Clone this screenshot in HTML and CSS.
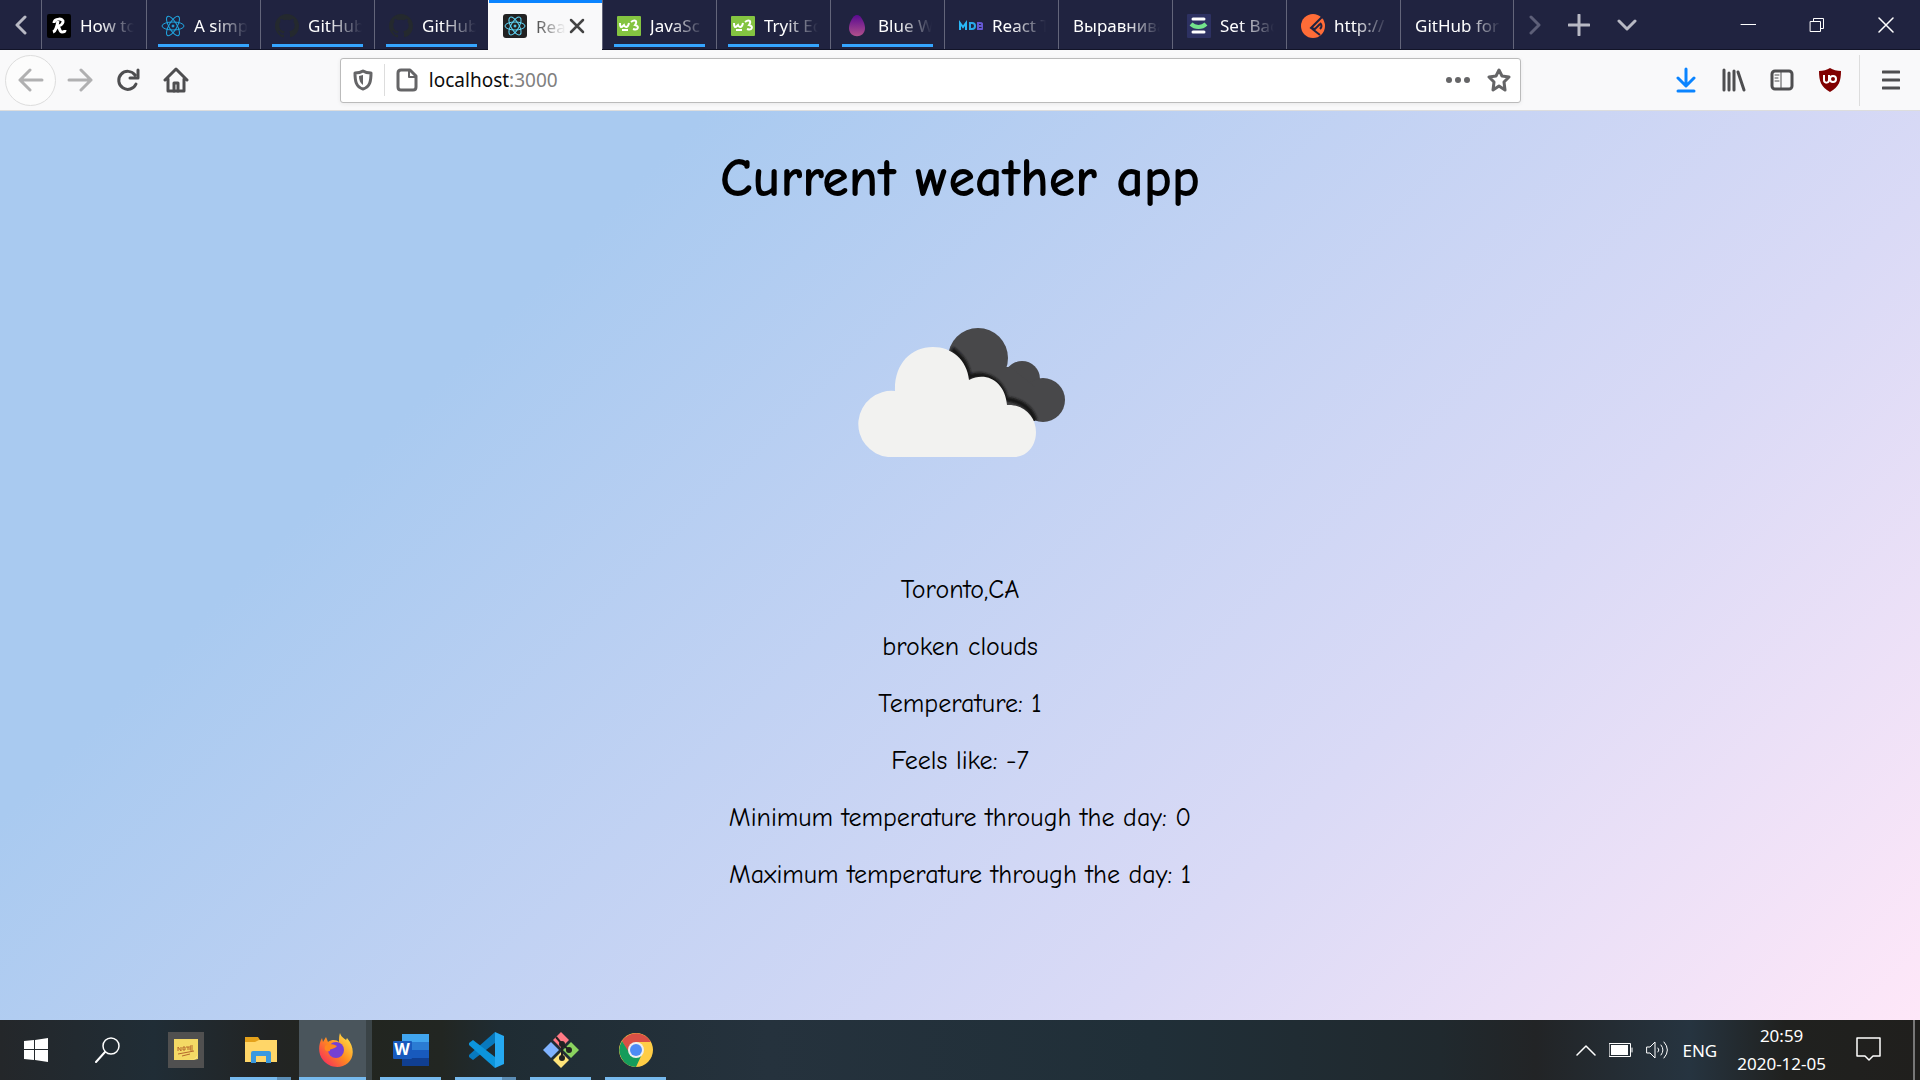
FILE: index.html
```html
<!DOCTYPE html>
<html lang="en">
<head>
<meta charset="utf-8">
<title>React App</title>
<link rel="stylesheet" href="styles.css">
</head>
<body>
<header>
  <nav class="tabbar" aria-label="Tabs">
    <button class="scroll" aria-label="Scroll left"><svg width="12" height="20" viewBox="0 0 12 20" class="line"><path d="M10 2 2 10l8 8" stroke-width="3"/></svg></button>
    <a href="#" class="tab first"><svg width="24" height="24" viewBox="0 0 24 24"><rect width="24" height="24" rx="2"/><path d="M6 18c3-1 4-6 5-11M7 9c0-5 10-5 9-1-1 4-5 4-6 4 3 0 2 6 5 6 2 0 3-1 3-2" fill="none" stroke="#fff" stroke-width="3"/></svg><span>How to</span></a>
    <a href="#" class="tab unread"><svg width="24" height="24" viewBox="0 0 24 24" class="atom"><ellipse cx="12" cy="12" rx="11" ry="4"/><ellipse cx="12" cy="12" rx="11" ry="4" transform="rotate(60 12 12)"/><ellipse cx="12" cy="12" rx="11" ry="4" transform="rotate(120 12 12)"/><circle cx="12" cy="12" r="1"/></svg><span>A simp</span></a>
    <a href="#" class="tab unread"><svg width="24" height="24" viewBox="0 0 16 16"><path class="octo" d="M8 0C3.6 0 0 3.6 0 8c0 3.500 2.300 6.500 5.500 7.600.4.100.5-.2.500-.4v-1.400c-2.200.5-2.700-1-2.700-1-.4-.9-.9-1.200-.9-1.200-.7-.5.1-.5.100-.5.800.1 1.200.8 1.200.8.700 1.200 1.900.9 2.300.7.100-.5.300-.9.500-1.100-1.800-.2-3.600-.9-3.600-4 0-.9.300-1.600.8-2.100-.1-.2-.4-1 .1-2.100 0 0 .7-.2 2.200.8a7.500 7.500 0 0 1 4 0c1.500-1 2.200-.8 2.200-.8.400 1.100.2 1.900.1 2.100.5.600.8 1.300.8 2.100 0 3.100-1.900 3.700-3.700 3.900.3.300.6.800.6 1.500v2.200c0 .2.100.5.600.4A8 8 0 0 0 16 8c0-4.400-3.600-8-8-8z"/></svg><span>GitHub</span></a>
    <a href="#" class="tab unread"><svg width="24" height="24" viewBox="0 0 16 16"><path class="octo" d="M8 0C3.6 0 0 3.6 0 8c0 3.500 2.300 6.500 5.500 7.600.4.100.5-.2.500-.4v-1.400c-2.200.5-2.700-1-2.700-1-.4-.9-.9-1.200-.9-1.200-.7-.5.1-.5.100-.5.800.1 1.200.8 1.200.8.700 1.200 1.900.9 2.300.7.100-.5.300-.9.500-1.100-1.800-.2-3.600-.9-3.600-4 0-.9.300-1.600.8-2.100-.1-.2-.4-1 .1-2.100 0 0 .7-.2 2.200.8a7.500 7.500 0 0 1 4 0c1.500-1 2.200-.8 2.200-.8.400 1.100.2 1.900.1 2.100.5.600.8 1.300.8 2.100 0 3.100-1.900 3.700-3.700 3.900.3.300.6.800.6 1.500v2.200c0 .2.100.5.600.4A8 8 0 0 0 16 8c0-4.400-3.600-8-8-8z"/></svg><span>GitHub</span></a>
    <div class="tab active"><svg width="24" height="24" viewBox="0 0 24 24" class="atom pale"><rect width="24" height="24" rx="3"/><ellipse cx="12" cy="12" rx="10" ry="4"/><ellipse cx="12" cy="12" rx="10" ry="4" transform="rotate(60 12 12)"/><ellipse cx="12" cy="12" rx="10" ry="4" transform="rotate(120 12 12)"/><circle cx="12" cy="12" r="1"/></svg><span>Rea</span><button class="close" aria-label="Close tab"><svg width="16" height="16" viewBox="0 0 16 16" class="line"><path d="m2 2 12 12M14 2 2 14" stroke-width="2.500"/></svg></button></div>
    <a href="#" class="tab unread"><svg width="24" height="24" viewBox="0 0 24 24"><rect y="2" width="24" height="20" rx="1" fill="#84c441"/><path d="M3 9c0 4 1 5 3 3l1-1c1 3 4 3 5-2M14 8c4-3 7-1 4 3 5 1 3 6-2 4M5 16h6" fill="none" stroke="#fff" stroke-width="2"/></svg><span>JavaSc</span></a>
    <a href="#" class="tab unread"><svg width="24" height="24" viewBox="0 0 24 24"><rect y="2" width="24" height="20" rx="1" fill="#84c441"/><path d="M3 9c0 4 1 5 3 3l1-1c1 3 4 3 5-2M14 8c4-3 7-1 4 3 5 1 3 6-2 4M5 16h6" fill="none" stroke="#fff" stroke-width="2"/></svg><span>Tryit Ed</span></a>
    <a href="#" class="tab unread"><svg width="24" height="24" viewBox="0 0 24 24"><defs><linearGradient id="egg" x2="0" y2="1"><stop stop-color="#5a0a91"/><stop offset="1" stop-color="#b0508c"/></linearGradient></defs><path d="M12 1c4 0 8 8 8 13 0 11-16 11-16 0C4 9 8 1 12 1" fill="url(#egg)"/></svg><span>Blue W</span></a>
    <a href="#" class="tab"><svg width="24" height="24" viewBox="0 0 24 24" fill="none" stroke-width="2"><path d="M1 16V9l3 4 3-4v7" stroke="#29b6f6"/><path d="M11 9h2c4 0 4 6 0 6h-2z" stroke="#29a8e8"/><path d="M19 9h2c3 0 3 3 0 3h-2 3c3 0 2 3 0 3h-3z" stroke="#6558d4"/></svg><span>React T</span></a>
    <a href="#" class="tab"><span>Выравнива</span></a>
    <a href="#" class="tab"><svg width="24" height="24" viewBox="0 0 24 24"><rect width="24" height="24" rx="1" fill="#2d3162"/><path d="M6 5h11M6 18h11" stroke="#fff" stroke-width="3" stroke-linecap="round"/><path d="M4 10c4 4 11 4 15 0" fill="none" stroke="#73e38c" stroke-width="4"/></svg><span>Set Bac</span></a>
    <a href="#" class="tab"><svg width="24" height="24" viewBox="0 0 24 24"><circle cx="12" cy="12" r="12" fill="#ff6c37"/><path d="m21 3-11 11 9 7M10 14l4 1 5-5M19 9c2 2 2 4 0 6" fill="none" stroke="#202340" stroke-width="2"/></svg><span>http://</span></a>
    <a href="#" class="tab last"><span>GitHub for</span></a>
    <button class="scroll dim" aria-label="Scroll right"><svg width="12" height="20" viewBox="0 0 12 20" class="line"><path d="m2 2 8 8-8 8" stroke-width="3"/></svg></button>
    <button class="tool" aria-label="New tab"><svg width="22" height="22" viewBox="0 0 22 22" class="line"><path d="M11 1v20M1 11h20" stroke-width="3"/></svg></button>
    <button class="tool" aria-label="List tabs"><svg width="20" height="12" viewBox="0 0 20 12" class="line"><path d="m2 2 8 8 8-8" stroke-width="3"/></svg></button>
    <div class="window">
      <button aria-label="Minimize"><svg width="16" height="16" viewBox="0 0 16 16" class="line"><path d="M1 7.500h15"/></svg></button>
      <button aria-label="Restore"><svg width="16" height="16" viewBox="0 0 16 16" class="line"><path d="M1.500 4.500h10v10h-10zM4.500 4V1.500h10v10H12"/></svg></button>
      <button aria-label="Close"><svg width="16" height="16" viewBox="0 0 16 16" class="line"><path d="m1 1 14 14M15 1 1 15" stroke-width="1.500"/></svg></button>
    </div>
  </nav>
  <div class="toolbar">
    <div class="nav">
      <button class="back" aria-label="Back"><svg width="26" height="24" viewBox="0 0 26 24" class="line"><path d="M12 2 2 12l10 10M2 12h22" stroke-width="3"/></svg></button>
      <button class="forward" aria-label="Forward"><svg width="26" height="24" viewBox="0 0 26 24" class="line"><path d="m14 2 10 10-10 10M24 12H2" stroke-width="3"/></svg></button>
      <button aria-label="Reload"><svg width="24" height="24" viewBox="0 0 24 24" class="line"><path d="M19 7a9 9 0 1 0 1 9M22 2v8h-8" stroke-width="3"/></svg></button>
      <button aria-label="Home"><svg width="26" height="26" viewBox="0 0 26 26" class="line"><path d="M2 13 13 2l11 11M5 12v12h16V12" stroke-width="3"/><path d="M11 24v-8h4v8" stroke-width="3"/></svg></button>
    </div>
    <div class="urlbar">
      <svg width="20" height="22" viewBox="0 0 20 22" class="line"><path d="M10 2c3 2 5 2 8 2 0 8-1 14-8 16C3 18 2 12 2 4c3 0 5 0 8-2z" stroke-width="3"/><path d="M10 6v10c-3-2-4-5-4-9z" fill="currentColor" stroke="none"/></svg>
      <i class="rule"></i>
      <svg width="22" height="24" viewBox="0 0 22 24" class="line"><path d="M5 2h9l6 6v11c0 2-1 3-3 3H5c-2 0-3-1-3-3V5c0-2 1-3 3-3z" stroke-width="3"/><path d="M13 2v7h7" stroke-width="2"/></svg>
      <div class="address" role="textbox" aria-label="Address">localhost<em>:3000</em></div>
      <button aria-label="Page actions"><svg width="26" height="8" viewBox="0 0 26 8" fill="currentColor"><circle cx="4" cy="4" r="3"/><circle cx="13" cy="4" r="3"/><circle cx="22" cy="4" r="3"/></svg></button>
      <button aria-label="Bookmark"><svg width="24" height="24" viewBox="0 0 24 24" class="line"><path d="m12 2 3 6 7 1-5 5 1 8-6-4-6 4 1-8-5-5 7-1z" stroke-width="3"/></svg></button>
    </div>
    <div class="extras">
      <button class="blue" aria-label="Downloads"><svg width="20" height="26" viewBox="0 0 20 26" class="line"><path d="M10 2v16M2 11l8 8 8-8M2 24h16" stroke-width="3"/></svg></button>
      <button aria-label="Library"><svg width="24" height="24" viewBox="0 0 24 24" class="line"><path d="M2 2v20M7 5v17M12 3v19M16 4l6 18" stroke-width="3"/></svg></button>
      <button aria-label="Sidebar"><svg width="24" height="22" viewBox="0 0 24 22" class="line"><rect x="2" y="2" width="20" height="18" rx="3" stroke-width="3"/><path d="M11 2v18M5 6h4M5 9h3M5 12h4"/></svg></button>
      <button aria-label="uBlock Origin"><svg width="22" height="24" viewBox="0 0 22 24"><path d="M11 0c3 2 7 3 11 3 0 10-2 16-11 21C2 19 0 13 0 3c4 0 8-1 11-3z" fill="#800000"/><path d="M5 7v5c0 4 5 3 5 0V7" fill="none" stroke="#fff" stroke-width="2"/><circle cx="14" cy="11" r="3" fill="none" stroke="#fff" stroke-width="2"/></svg></button>
    </div>
    <button class="menu" aria-label="Menu"><svg width="18" height="20" viewBox="0 0 18 20" class="line"><path d="M1 2h16M1 10h16M1 18h16" stroke-width="3"/></svg></button>
  </div>
</header>
<main>
  <h1>Current weather app</h1>
  <svg class="cloud" width="300" height="300" viewBox="0 0 300 300" role="img" aria-label="broken clouds">
    <defs><filter id="soft"><feGaussianBlur stdDeviation="1"/></filter>
    <clipPath id="rear"><circle cx="168" cy="111" r="30"/><circle cx="212" cy="132" r="18"/><circle cx="233" cy="153" r="22"/><path d="M145 120h55l25 20v34h-20z"/></clipPath></defs>
    <g fill="#48484a"><circle cx="168" cy="111" r="30"/><circle cx="212" cy="132" r="18"/><circle cx="233" cy="153" r="22"/><path d="M145 120h55l25 20v34h-20z"/></g>
    <path d="M142 102c10 8 15 15 17 28 15-6 32 2 37 22 15 2 25 8 29 22" fill="none" stroke="#171719" stroke-width="5" filter="url(#soft)" clip-path="url(#rear)"/>
    <path d="M78 210a33 33 0 1 1 7-66c-1-26 15-44 38-44 19 0 34 13 36 33 18-9 36 2 38 25 17-1 29 12 29 27 0 14-9 25-22 25z" fill="#f2f2f0"/>
  </svg>
  <p>Toronto,CA</p>
  <p>broken clouds</p>
  <p>Temperature: 1</p>
  <p>Feels like: -7</p>
  <p>Minimum temperature through the day: 0</p>
  <p>Maximum temperature through the day: 1</p>
</main>
<footer class="taskbar">
  <button class="start" aria-label="Start"><svg width="24" height="24" viewBox="0 0 24 24" fill="#fff"><path d="m0 3 10-1v9H0zM11 2l13-2v11H11zM0 12h10v10L0 21zM11 12h13v12l-13-2z"/></svg></button>
  <button class="search" aria-label="Search"><svg width="26" height="26" viewBox="0 0 26 26" class="line"><circle cx="16" cy="9" r="8" stroke-width="1.500"/><path d="m10 15-9 10" stroke-width="2"/></svg></button>
  <div class="apps">
    <button aria-label="Notes"><svg width="36" height="36" viewBox="0 0 36 36"><path fill="#505050" d="M0 0h36v36H0z"/><path fill="#f4d965" d="M6 7h24v20l-4 1H6z"/><path fill="#fff0a0" d="M30 19c0 6-3 9-9 9 7 0 9-2 9-9z"/><path d="M10 19v-4l3 4v-4M15 15h2v3h-2zM18 15h3M20 15v3M25 14h-3v4h3M22 16h3M10 22l16-3M14 24l8-2" fill="none" stroke="#b6682d"/></svg></button>
    <button class="open stack" aria-label="Explorer"><svg width="34" height="28" viewBox="0 0 34 28"><path fill="#e4a11b" d="M1 1h13l2 3v5H1z"/><path fill="#ffd668" d="M1 6h10l4-2h18v22H1z"/><path fill="#3999df" d="M7 27V17q0-2 2-2h16q2 0 2 2v10h-5v-7H12v7z"/></svg></button>
    <button class="open current" aria-label="Firefox"><svg width="36" height="36" viewBox="0 0 36 36"><defs><linearGradient id="fox" x1="1" x2="0" y2="1"><stop stop-color="#fff44f"/><stop offset=".5" stop-color="#ff8a20"/><stop offset="1" stop-color="#f5156c"/></linearGradient></defs><path d="M22 1c1 4 4 5 6 7l1-2c8 9 7 20 1 25-8 7-20 4-25-3C0 22 0 13 4 6l1 4 3-5 2 5c4-3 9-2 11 0 0-4 0-6 1-9z" fill="url(#fox)"/><circle cx="18" cy="18" r="8" fill="#7540d4"/><path d="M7 14c3-3 8-2 12 0-3 4-8 2-7 5-5 1-6-2-5-5z" fill="#ff871f"/></svg></button>
    <button class="open" aria-label="Word"><svg width="36" height="32" viewBox="0 0 36 32"><path fill="#41a5ee" d="M9 0h27v8H9z"/><path fill="#2b7cd3" d="M9 8h27v8H9z"/><path fill="#185abd" d="M9 16h27v8H9z"/><path fill="#103f91" d="M9 24h27v8H9z"/><rect y="7" width="19" height="18" rx="1" fill="#185abd"/><text x="9" y="21" class="w">W</text></svg></button>
    <button class="open stack" aria-label="Visual Studio Code"><svg width="36" height="36" viewBox="0 0 36 36"><path fill="#0879bd" d="M1 23 27 0v11L5 28l-4-3z"/><path fill="#0c95dc" d="M1 13v-2l4-3 22 17v11L1 13z"/><path fill="#25a9f2" d="m27 0 9 4v28l-9 4z"/></svg></button>
    <button class="open" aria-label="Git Bash"><svg width="36" height="36" viewBox="0 0 36 36"><path fill="#ff7a85" d="m18 0 8 8-8 8-8-8z"/><path fill="#8bd35f" d="m28 10 8 8-8 8-8-8z"/><path fill="#ffe47a" d="m18 20 8 8-8 8-8-8z"/><path fill="#80b3ff" d="m8 10 8 8-8 8-8-8z"/><path d="m13 5 6 7v14M19 12l7 6" fill="none" stroke="#222" stroke-width="2"/><g fill="#222"><circle cx="19" cy="12" r="3"/><circle cx="26" cy="18" r="3"/><circle cx="19" cy="26" r="3"/></g></svg></button>
    <button class="open" aria-label="Chrome"><svg width="34" height="34" viewBox="0 0 34 34"><circle cx="17" cy="17" r="17" fill="#ffcd46"/><path d="M3 8a17 17 0 0 1 29 1H17l-7 12z" fill="#db5045"/><path d="M3 8l8 13 12 0-6 13A17 17 0 0 1 3 8z" fill="#159c5b"/><circle cx="17" cy="17" r="8" fill="#eee"/><circle cx="17" cy="17" r="6" fill="#4c8bf5"/></svg></button>
  </div>
  <div class="tray">
    <svg width="20" height="12" viewBox="0 0 20 12" class="line"><path d="m1 11 9-9 9 9" stroke-width="1.500"/></svg>
    <svg width="24" height="14" viewBox="0 0 24 14" class="line"><path d="M.5.500h21v13H.5zM23 5v4"/><path fill="#fff" stroke="none" d="M2 2h17v10H2z"/></svg>
    <svg width="24" height="20" viewBox="0 0 24 20" class="line"><path d="M1 7h3l5-5v16l-5-5H1zM12 8q2 2 0 4M15 5q4 5 0 10M18 2q7 8 0 16"/></svg>
    <span>ENG</span>
    <time>20:59<br>2020-12-05</time>
    <button aria-label="Notifications"><svg width="26" height="26" viewBox="0 0 26 26" class="line"><path d="M1 1h23v18h-7l-4 4-4-4H1z" stroke-width="1.500"/></svg></button>
    <i class="desktop"></i>
  </div>
</footer>
</body>
</html>
```

FILE: styles.css
```css
* { box-sizing: border-box; }
body {
  margin: 0;
  min-height: 100vh;
  display: flex;
  flex-direction: column;
  font-family: "Segoe UI", "Noto Sans", sans-serif;
}
button {
  border: 0;
  padding: 0;
  margin: 0;
  background: none;
  color: inherit;
  font: inherit;
  display: flex;
  align-items: center;
  justify-content: center;
}
svg { flex: none; display: block; }
.line { fill: none; stroke: currentColor; stroke-linecap: round; stroke-linejoin: round; }

.tabbar {
  display: flex;
  height: 50px;
  background: #202340;
  border-bottom: 1px solid #121428;
  color: #b8b9c4;
}
.scroll { width: 41px; }
.dim { color: #5d5f78; }
.tab {
  position: relative;
  flex: 0 1 114px;
  min-width: 0;
  display: flex;
  align-items: center;
  gap: 9px;
  padding: 2px 12px 0 14px;
  border-left: 1px solid #63657a;
  color: #fff;
  font-size: 17px;
  text-decoration: none;
  white-space: nowrap;
}
.last { border-right: 1px solid #63657a; }
.tab span {
  flex: 1;
  min-width: 0;
  mask-image: linear-gradient(to right, #000 calc(100% - 34px), transparent);
}
.first { flex-basis: 105px; padding-left: 5px; }
.unread::after {
  content: "";
  position: absolute;
  left: 11px;
  right: 11px;
  bottom: 2px;
  height: 3px;
  background: #35a5ff;
}
.active {
  background: #f9f9fa;
  color: #333;
  border-left-color: #f9f9fa;
  height: 50px;
}
.active::before {
  content: "";
  position: absolute;
  inset: 0 0 auto;
  height: 3px;
  background: #0a84ff;
}
.active span { margin-right: -6px; }
.close { color: #444; margin-right: 5px; }
.atom { fill: none; stroke: #20a5e0; }
.atom circle { fill: #20a5e0; }
.pale { stroke: #61dafb; }
.pale rect { fill: #222; stroke: none; }
.octo { fill: #24292e; }
.tool { width: 48px; }
.window { display: flex; margin-left: auto; color: #fff; }
.window button { width: 69px; }

.toolbar {
  display: flex;
  align-items: center;
  height: 61px;
  background: #f9f9fa;
  border-bottom: 1px solid #ddd;
  color: #4e4e50;
}
.nav { display: flex; align-items: center; flex: 335 1 0; padding-left: 5px; }
.nav button { width: 48px; height: 48px; }
.nav .back {
  width: 51px;
  height: 51px;
  border: 1px solid #ddd;
  border-radius: 50%;
  background: #fcfcfc;
  color: #b0b0b1;
}
.nav .forward { color: #b0b0b1; }
.urlbar {
  flex: 1159 1 0;
  display: flex;
  align-items: center;
  gap: 11px;
  height: 45px;
  padding: 0 9px 0 12px;
  background: #fff;
  border: 1px solid #bbb;
  border-radius: 3px;
  box-shadow: 0 1px 4px #0001;
  color: #656567;
}
.rule { width: 1px; height: 32px; background: #ddd; }
.address { flex: 1; font-size: 19px; color: #0c0c0d; }
.address em { font-style: normal; color: #808080; }
.urlbar button { margin-left: 5px; }
.extras { display: flex; flex: 333 1 0; justify-content: flex-end; padding-right: 5px; }
.extras button { width: 48px; height: 48px; }
.blue { color: #0a84ff; }
.menu { width: 61px; height: 51px; padding-left: 3px; border-left: 1px solid #ddd; }

main {
  flex: 1;
  display: flex;
  flex-direction: column;
  align-items: center;
  padding: 32px 20px 112px;
  background: linear-gradient(135deg, #a9caf0 25%, #dadaf6 71%, #fee7f8);
  font-family: "Comic Sans MS", "Comic Neue", "Open Sans", sans-serif;
  color: #000;
}
h1 { margin: 0; font-size: 54px; line-height: 72px; text-align: center; }
.cloud { margin: 32px 0 15px; }
p { margin: 0; font-size: 26px; line-height: 57px; text-align: center; }

.taskbar {
  display: flex;
  height: 60px;
  background: linear-gradient(to right, #24272a, #202d36 8%, #222424 14%, #22251f 17%, #222622 23%, #1f2c33 26%, #25323d 40%, #202f38 60%, #20292e 75%, #222426 80%, #263440 88%, #20211f 93%, #201f1d);
  color: #fff;
}
.start, .search { width: 72px; }
.apps { display: flex; gap: 14px; padding-left: 11px; }
.apps button { position: relative; width: 61px; }
.open::after {
  content: "";
  position: absolute;
  left: 0;
  right: 0;
  bottom: 0;
  height: 3px;
  background: #76b9ed;
}
.stack::after { background: linear-gradient(to right, #76b9ed 47px, #5b8db5 47px); }
.apps .current {
  width: 73px;
  margin: 0 -6px;
  padding-left: 6px;
  background: #4a555c;
  border-right: 6px solid #3a4346;
}
.w { font: 700 16px "Open Sans", sans-serif; fill: #fff; text-anchor: middle; }
.tray { display: flex; align-items: center; gap: 13px; margin-left: auto; font-size: 17px; }
.tray time { line-height: 28px; text-align: center; padding: 0 17px 0 7px; }
.desktop { width: 7px; height: 60px; border-left: 2px solid #777; margin-left: 18px; }
```
